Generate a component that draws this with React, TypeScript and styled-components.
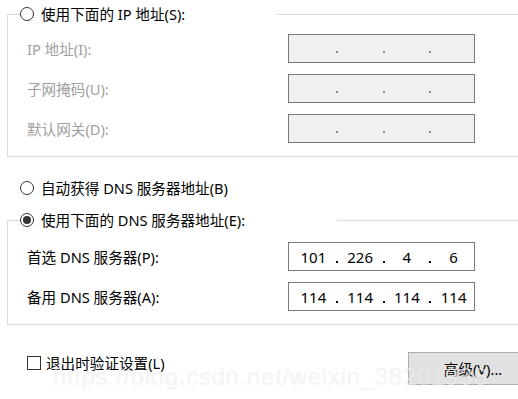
import React from 'react';
import styled, { createGlobalStyle } from 'styled-components';

const GlobalStyle = createGlobalStyle`
  html, body {
    margin: 0;
    padding: 0;
    background: #fff;
    overflow: hidden;
  }
  body {
    font-family: "Noto Sans", "Noto Sans CJK SC", sans-serif;
    font-size: 14.6px;
    color: #000;
  }
`;

const Page = styled.div`
  position: relative;
  width: 518px;
  height: 399px;
  overflow: hidden;
`;

// the dialog is wider than the crop, so the right edge falls outside
const Sheet = styled.div`
  width: 540px;
  display: flex;
  flex-direction: column;
`;

const GroupBox = styled.div<{ $top: number }>`
  margin: ${(p) => p.$top}px 0 0 7px;
  border: 1px solid #dcdcdc;
  display: flex;
  flex-direction: column;
`;

const Legend = styled.div<{ $width: number }>`
  width: ${(p) => p.$width}px;
  height: 18px;
  margin: -10px 0 0 12px;
  background: #fff;
`;

const Option = styled.label`
  display: flex;
  align-items: center;
  gap: 7px;
  height: 18px;
  line-height: 18px;
  white-space: nowrap;
`;

const Radio = styled.span<{ $checked?: boolean }>`
  width: 14px;
  height: 14px;
  box-sizing: border-box;
  border: 1px solid #333;
  border-radius: 50%;
  display: flex;
  align-items: center;
  justify-content: center;
  flex-shrink: 0;
  &::after {
    content: '';
    display: ${(p) => (p.$checked ? 'block' : 'none')};
    width: 8px;
    height: 8px;
    border-radius: 50%;
    background: #333;
  }
`;

const CheckBox = styled.span`
  width: 14px;
  height: 14px;
  box-sizing: border-box;
  border: 1px solid #333;
  background: #fff;
  flex-shrink: 0;
`;

const Fields = styled.div<{ $padTop: number }>`
  display: grid;
  grid-template-columns: 261px 187px;
  row-gap: 11px;
  padding: ${(p) => p.$padTop}px 0 13px 19px;
`;

const FieldLabel = styled.div<{ $disabled?: boolean }>`
  align-self: center;
  color: ${(p) => (p.$disabled ? '#a0a0a0' : '#000')};
  white-space: nowrap;
`;

const IpBox = styled.div<{ $disabled?: boolean }>`
  height: 29px;
  box-sizing: border-box;
  border: 1px solid #7a7a7a;
  background: ${(p) => (p.$disabled ? '#f0f0f0' : '#fff')};
  display: grid;
  grid-template-columns: 1fr 6px 1fr 6px 1fr 6px 1fr;
  align-items: center;
  padding-left: 4px;
  font-size: 15px;
`;

const Octet = styled.span`
  text-align: center;
`;

const Dot = styled.span<{ $disabled?: boolean }>`
  display: flex;
  justify-content: center;
  &::before {
    content: '';
    width: 2px;
    height: 2px;
    margin-top: ${(p) => (p.$disabled ? 7 : 11)}px;
    background: ${(p) => (p.$disabled ? '#8a8a8a' : '#000')};
  }
`;

const LooseOption = styled.div`
  margin: 22px 0 0 20px;
`;

const Footer = styled.div`
  display: flex;
  justify-content: space-between;
  align-items: flex-start;
  margin-top: 27px;
  padding-left: 27px;
`;

const CheckRow = styled(Option)`
  margin-top: 2px;
  gap: 5px;
`;

const Button = styled.button`
  width: 132px;
  height: 33px;
  box-sizing: border-box;
  border: 1px solid #adadad;
  background: #e1e1e1;
  font: inherit;
  color: #000;
  padding: 0 2px 0 0;
`;

const Watermark = styled.div`
  position: absolute;
  left: 53px;
  top: 363px;
  font-family: "Liberation Sans", Arial, sans-serif;
  font-size: 24px;
  letter-spacing: 0.7px;
  color: rgba(255, 255, 255, 0.6);
  text-shadow: 0 0 1px rgba(0, 0, 0, 0.1);
  white-space: nowrap;
  pointer-events: none;
`;

const IpField = ({ value, disabled }: { value?: string[]; disabled?: boolean }) => {
  const parts = value ?? ['', '', '', ''];
  return (
    <IpBox $disabled={disabled}>
      {parts.map((p, i) => (
        <React.Fragment key={i}>
          {i > 0 && <Dot $disabled={disabled} />}
          <Octet>{p}</Octet>
        </React.Fragment>
      ))}
    </IpBox>
  );
};

const staticRows = ['IP 地址(I):', '子网掩码(U):', '默认网关(D):'];

const dnsRows = [
  { label: '首选 DNS 服务器(P):', value: ['101', '226', '4', '6'] },
  { label: '备用 DNS 服务器(A):', value: ['114', '114', '114', '114'] },
];

export default function App() {
  return (
    <Page>
      <GlobalStyle />
      <Sheet>
        <GroupBox $top={14}>
          <Legend $width={256}>
            <Option>
              <Radio />
              使用下面的 IP 地址(S):
            </Option>
          </Legend>
          <Fields $padTop={11}>
            {staticRows.map((label) => (
              <React.Fragment key={label}>
                <FieldLabel $disabled>{label}</FieldLabel>
                <IpField disabled />
              </React.Fragment>
            ))}
          </Fields>
        </GroupBox>

        <LooseOption>
          <Option>
            <Radio />
            自动获得 DNS 服务器地址(B)
          </Option>
        </LooseOption>

        <GroupBox $top={23}>
          <Legend $width={317}>
            <Option>
              <Radio $checked />
              使用下面的 DNS 服务器地址(E):
            </Option>
          </Legend>
          <Fields $padTop={13}>
            {dnsRows.map((row) => (
              <React.Fragment key={row.label}>
                <FieldLabel>{row.label}</FieldLabel>
                <IpField value={row.value} />
              </React.Fragment>
            ))}
          </Fields>
        </GroupBox>

        <Footer>
          <CheckRow>
            <CheckBox />
            退出时验证设置(L)
          </CheckRow>
          <Button>高级(V)...</Button>
        </Footer>
      </Sheet>
      <Watermark>https://blog.csdn.net/weixin_38201936</Watermark>
    </Page>
  );
}
